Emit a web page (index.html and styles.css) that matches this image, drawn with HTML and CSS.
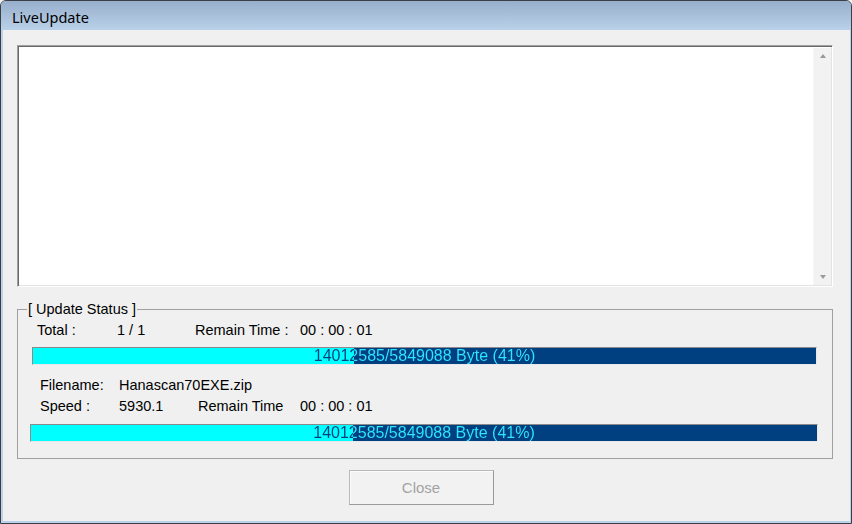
FILE: index.html
```html
<!DOCTYPE html>
<html>
<head>
<meta charset="utf-8">
<link rel="stylesheet" href="styles.css">
</head>
<body>
<div class="window">
  <div class="titlebar"><span class="title">LiveUpdate</span></div>
  <div class="client">
    <div class="logbox">
      <div class="logtext"></div>
      <div class="vscroll">
        <span class="arrow up"></span>
        <span class="arrow down"></span>
      </div>
    </div>
    <fieldset class="status">
      <legend>[ Update Status ]</legend>
      <div class="row row-total">
        <span class="c-label1">Total :</span>
        <span class="c-val1">1 / 1</span>
        <span class="c-rem1">Remain Time :</span>
        <span>00 : 00 : 01</span>
      </div>
      <div class="bar bar1" style="--p:41%">
        <span class="bartext">14012585/5849088 Byte (41%)</span>
      </div>
      <div class="row row-file">
        <span class="c-label2">Filename:</span>
        <span>Hanascan70EXE.zip</span>
      </div>
      <div class="row row-speed">
        <span class="c-label2">Speed :</span>
        <span class="c-val2">5930.1</span>
        <span class="c-rem2">Remain Time</span>
        <span>00 : 00 : 01</span>
      </div>
      <div class="bar bar2" style="--p:41%">
        <span class="bartext">14012585/5849088 Byte (41%)</span>
      </div>
    </fieldset>
    <div class="buttons">
      <button class="btn" disabled>Close</button>
    </div>
  </div>
</div>
</body>
</html>
```

FILE: styles.css
```css
html, body {
  margin: 0;
  padding: 0;
  background: #f0f0f0;
}
body {
  font-family: "Liberation Sans", Arial, sans-serif;
  font-size: 14.5px;
  color: #000;
}
.window {
  width: 852px;
  height: 524px;
  box-sizing: border-box;
  border: 1px solid #3a3f45;
  border-radius: 6px 6px 0 0;
  display: flex;
  flex-direction: column;
  overflow: hidden;
  background: #bcd2ea;
}
.titlebar {
  height: 29px;
  flex: none;
  background: linear-gradient(to bottom, #98afcc 0%, #a9c0db 50%, #bad1ea 100%);
  display: flex;
  align-items: center;
  padding-left: 11px;
}
.title {
  font-family: "Noto Sans", "Open Sans", sans-serif;
  font-size: 14.5px;
  color: #000;
  margin-top: 2px;
}
.client {
  flex: 1;
  background: #f0f0f0;
  margin: 0 1px 2px 2px;
  padding: 15px 17px 0 14px;
  display: flex;
  flex-direction: column;
  box-sizing: border-box;
}
.logbox {
  height: 242px;
  box-sizing: border-box;
  border-top: 1px solid #a0a0a0;
  border-left: 1px solid #a0a0a0;
  border-right: 1px solid #ffffff;
  border-bottom: 1px solid #ffffff;
  box-shadow: inset 1px 1px 0 #696969, inset -1px -1px 0 #e3e3e3;
  background: #fff;
  display: flex;
  padding: 2px 1px 1px 2px;
}
.logtext {
  flex: 1;
}
.vscroll {
  width: 17px;
  background: #f2f2f2;
  border-left: 1px solid #f7f7f7;
  display: flex;
  flex-direction: column;
  justify-content: space-between;
  align-items: center;
  padding: 6px 0 6px;
}
.arrow {
  width: 0;
  height: 0;
  border-left: 3.5px solid transparent;
  border-right: 3.5px solid transparent;
}
.arrow.up {
  border-bottom: 4px solid #9a9a9a;
}
.arrow.down {
  border-top: 4px solid #9a9a9a;
}
.status {
  margin: 14px 0 0 0;
  padding: 1px 15px 16px 0;
  border: 1px solid #a0a0a0;
  min-width: 0;
  height: 158px;
  box-sizing: border-box;
}
.status legend {
  padding: 0 1px;
  margin-left: 9px;
  line-height: 17px;
  font-size: 14.5px;
}
.row {
  display: flex;
  height: 21px;
  align-items: center;
  white-space: nowrap;
}
.row-total {
  padding-left: 19px;
  height: 21px;
}
.c-label1 { width: 80px; }
.c-val1 { width: 78px; }
.c-rem1 { width: 105px; }
.row-file {
  padding-left: 22px;
  margin-top: 9px;
}
.row-speed {
  padding-left: 22px;
}
.c-label2 { width: 79px; }
.c-val2 { width: 79px; }
.c-rem2 { width: 102px; }
.bar {
  height: 18px;
  box-sizing: border-box;
  border-top: 1px solid #8a8a8a;
  border-left: 1px solid #8a8a8a;
  border-bottom: 1px solid #e8e8e8;
  border-right: 1px solid #e8e8e8;
  background: linear-gradient(90deg, #00ffff 0, #00ffff var(--p), #004080 var(--p), #004080 100%);
  display: flex;
  align-items: center;
}
.bar1 {
  margin: 7px 0 0 14px;
}
.bar2 {
  margin: 8px -1px 0 12px;
}
.bartext {
  display: block;
  width: 100%;
  text-align: center;
  font-family: "Liberation Sans", Arial, sans-serif;
  font-size: 16px;
  line-height: 16px;
  background: linear-gradient(90deg, #00407f 0, #00407f var(--p), #2ee6ff var(--p), #2ee6ff 100%);
  -webkit-background-clip: text;
  background-clip: text;
  color: transparent;
}
.buttons {
  display: flex;
  justify-content: center;
  padding-right: 8px;
  margin-top: 11px;
}
.btn {
  width: 145px;
  height: 35px;
  box-sizing: border-box;
  background: #f2f2f2;
  border: 1px solid #b9b9b9;
  border-right-color: #9a9a9a;
  border-bottom-color: #9a9a9a;
  box-shadow: inset 1px 1px 0 #fbfbfb;
  font-family: "Liberation Sans", Arial, sans-serif;
  font-size: 15px;
  color: #a3a3a3;
  padding: 0;
}
```
